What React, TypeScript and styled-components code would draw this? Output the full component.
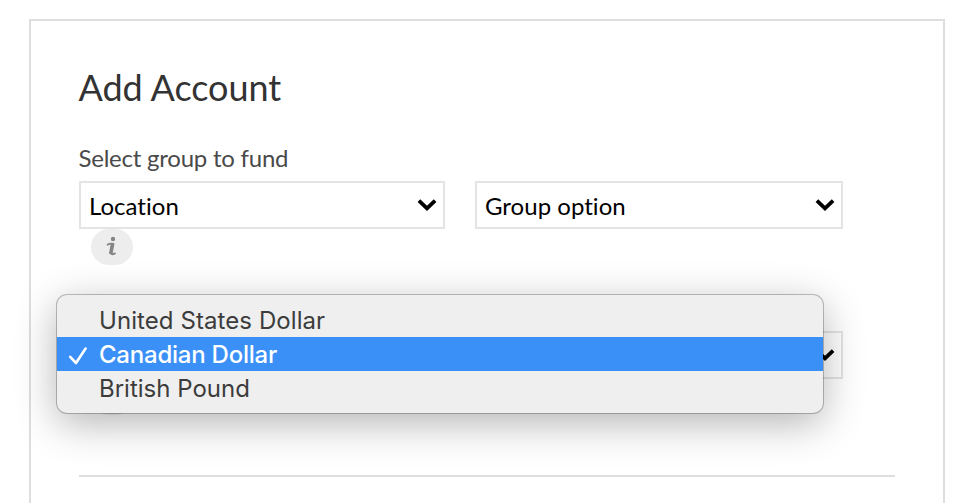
import React from "react";
import styled, { createGlobalStyle } from "styled-components";

const GlobalStyle = createGlobalStyle`
  *, *::before, *::after { box-sizing: border-box; }
  body {
    margin: 0;
    background: #fff;
    font-family: Lato, "Liberation Sans", sans-serif;
    font-variant-ligatures: none;
    -webkit-font-smoothing: antialiased;
  }
`;

const Page = styled.main`
  height: 504px;
  padding: 19px 17px 0 29px;
  overflow: hidden;
`;

const Card = styled.section`
  height: 484px;
  padding: 44px 48px 0;
  border: 2px solid #dedede;
  border-bottom: 0;
`;

const Title = styled.h1`
  margin: 0 0 0 -0.5px;
  font-size: 36px;
  font-weight: 400;
  line-height: 44px;
  letter-spacing: -0.05px;
  color: #333;
`;

const Label = styled.label`
  display: block;
  margin: 33px 0 0 -0.5px;
  height: 39px;
  font-size: 24px;
  line-height: 32px;
  letter-spacing: -0.23px;
  color: #4a4a4a;
`;

const FieldRow = styled.div`
  display: grid;
  grid-template-columns: 366px 368px;
  column-gap: 30px;
`;

const CurrencyField = styled.div`
  position: relative;
  width: 764px;
  margin-top: 66px;
`;

const SelectBox = styled.button`
  display: flex;
  align-items: center;
  justify-content: space-between;
  width: 100%;
  height: 48px;
  padding: 2px 6px 0 8px;
  border: 2px solid #e4e4e4;
  background: #fff;
  color: #000;
  font: 400 24px/30px Lato, "Liberation Sans", sans-serif;
  font-variant-ligatures: none;
  letter-spacing: 0.02px;
`;

const Arrow = styled.svg`
  display: block;
  width: 20px;
  height: 14px;
  margin-top: -2px;
`;

const InfoBadge = styled.span`
  display: block;
  width: 42px;
  height: 36px;
  margin-left: 12px;
  border-radius: 18px;
  background: #ededed;
`;

const InfoGlyph = styled.svg`
  display: block;
  width: 42px;
  height: 36px;
`;

const Menu = styled.ul`
  position: absolute;
  top: -36px;
  left: -22px;
  width: 766px;
  height: 118px;
  margin: 0;
  padding: 8px 0;
  list-style: none;
  border-radius: 10px;
  background: #efefef;
  box-shadow: 0 0 0 1px rgba(0, 0, 0, 0.24), 0 10px 40px rgba(0, 0, 0, 0.3);
`;

const MenuItem = styled.li<{ $selected?: boolean; $spacing: string }>`
  display: grid;
  grid-template-columns: 42px 1fr;
  height: 34px;
  background: ${(p) => (p.$selected ? "#3a90f6" : "transparent")};
  color: ${(p) => (p.$selected ? "#fff" : "#3c3c3c")};
  font: ${(p) => (p.$selected ? 500 : 400)} 24px/36px Inter, sans-serif;
  letter-spacing: ${(p) => p.$spacing};
`;

const Check = styled.svg`
  display: block;
  width: 20px;
  height: 20px;
  margin: 9px 0 0 11px;
`;

const Divider = styled.hr`
  height: 2px;
  margin: 60px 0 0;
  border: 0;
  background: #dedede;
`;

function Select({ value }: { value: string }) {
  return (
    <SelectBox type="button">
      <span>{value}</span>
      <Arrow viewBox="0 0 20 14" aria-hidden="true">
        <path d="M1.9 2.7 10 10.3 18.1 2.7" fill="none" stroke="#000" strokeWidth="3.8" />
      </Arrow>
    </SelectBox>
  );
}

function Info() {
  return (
    <InfoBadge>
      <InfoGlyph viewBox="0 0 42 36" aria-label="Information">
        <circle cx="22" cy="10" r="2.2" fill="#858585" />
        <path
          d="M16.6 15.7C18 14.7 20.5 14.4 22.3 14.9L20 23.4C19.7 25.4 21.2 25.8 24 24.4"
          fill="none"
          stroke="#858585"
          strokeWidth="1.8"
          strokeLinecap="round"
        />
        <path d="M21.6 14.6 19.7 25" stroke="#858585" strokeWidth="3.6" />
      </InfoGlyph>
    </InfoBadge>
  );
}

const currencies = [
  { name: "United States Dollar", spacing: "0.08px" },
  { name: "Canadian Dollar", spacing: "-0.23px", selected: true },
  { name: "British Pound", spacing: "0px" },
];

export default function App() {
  return (
    <>
      <GlobalStyle />
      <Page>
        <Card>
          <Title>Add Account</Title>
          <Label>Select group to fund</Label>
          <FieldRow>
            <Select value="Location" />
            <Select value="Group option" />
          </FieldRow>
          <Info />
          <CurrencyField>
            <Select value="" />
            <Info />
            <Menu>
              {currencies.map((c) => (
                <MenuItem key={c.name} $selected={c.selected} $spacing={c.spacing}>
                  <span>
                    {c.selected && (
                      <Check viewBox="0 0 20 20" aria-hidden="true">
                        <path
                          d="M2.2 10.8 8 17 17.6 2.5"
                          fill="none"
                          stroke="#fff"
                          strokeWidth="2.6"
                          strokeLinecap="round"
                          strokeLinejoin="round"
                        />
                      </Check>
                    )}
                  </span>
                  <span>{c.name}</span>
                </MenuItem>
              ))}
            </Menu>
          </CurrencyField>
          <Divider />
        </Card>
      </Page>
    </>
  );
}
